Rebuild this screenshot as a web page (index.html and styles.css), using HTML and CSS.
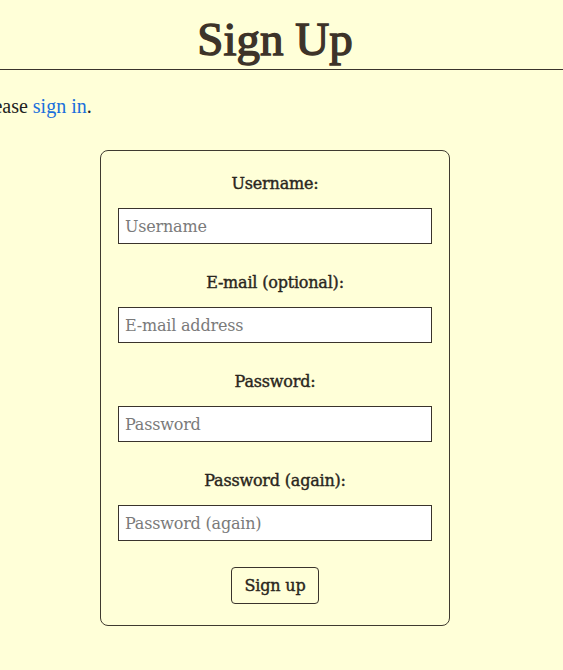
FILE: index.html
```html
<!DOCTYPE html>
<html lang="en">
<head>
<meta charset="utf-8">
<title>Sign Up</title>
<link rel="stylesheet" href="styles.css">
</head>
<body>
<header class="page-head">
  <h1 class="title">Sign Up</h1>
</header>
<main class="content">
  <p class="intro">Already have an account? Then please <a href="#" class="link">sign in</a>.</p>
  <form class="card">
    <div class="field">
      <label class="label" for="u">Username:</label>
      <input class="input" id="u" type="text" placeholder="Username">
    </div>
    <div class="field">
      <label class="label" for="e">E-mail (optional):</label>
      <input class="input" id="e" type="email" placeholder="E-mail address">
    </div>
    <div class="field">
      <label class="label" for="p1">Password:</label>
      <input class="input" id="p1" type="password" placeholder="Password">
    </div>
    <div class="field">
      <label class="label" for="p2">Password (again):</label>
      <input class="input" id="p2" type="password" placeholder="Password (again)">
    </div>
    <button class="btn" type="button">Sign up</button>
  </form>
</main>
</body>
</html>
```
FILE: styles.css
```css
html, body {
  margin: 0;
  padding: 0;
  background: #ffffd8;
  overflow: hidden;
}
body {
  width: 563px;
  height: 670px;
  font-family: "Liberation Serif", serif;
  color: #2a2620;
}
.page-head {
  border-bottom: 1px solid #3a342c;
  height: 69px;
  display: flex;
  justify-content: center;
  padding-right: 13px;
}
.title {
  margin: 0;
  padding-top: 12px;
  font-size: 47px;
  line-height: 54px;
  font-weight: 400;
  color: #3d3329;
  -webkit-text-stroke: 1.4px #3d3329;
}
.content {
  display: flex;
  flex-direction: column;
  align-items: center;
  padding-right: 13px;
}
.intro {
  align-self: flex-start;
  margin: 23px 0 0 0;
  font-size: 20px;
  line-height: 26px;
  white-space: nowrap;
  color: #222;
  transform: translateX(-280px);
}
.link {
  color: #1a6fdc;
  text-decoration: none;
}
.card {
  margin-top: 31px;
  box-sizing: border-box;
  width: 350px;
  border: 1px solid #3f3a30;
  border-radius: 8px;
  padding: 21px 17px 21px;
  display: flex;
  flex-direction: column;
  align-items: center;
}
.field {
  width: 100%;
  display: flex;
  flex-direction: column;
  align-items: center;
  margin-bottom: 27px;
}
.label {
  font-family: "DejaVu Serif", serif;
  font-size: 16px;
  font-weight: 400;
  line-height: 24px;
  color: #2a2620;
  margin-bottom: 12px;
  letter-spacing: -0.2px;
  -webkit-text-stroke: 0.4px #2a2620;
}
.input {
  width: 314px;
  height: 36px;
  box-sizing: border-box;
  border: 1px solid #3a342c;
  border-radius: 0;
  background: #fff;
  padding: 0 6px;
  font-family: "DejaVu Serif", serif;
  font-size: 16px;
  color: #222;
  letter-spacing: -0.2px;
}
.input::placeholder {
  color: #7a7a7a;
}
.btn {
  margin-top: -1px;
  width: 88px;
  height: 37px;
  border: 1px solid #3a342c;
  border-radius: 4px;
  background: #ffffd8;
  font-family: "DejaVu Serif", serif;
  font-weight: 400;
  font-size: 16px;
  color: #2a2620;
  letter-spacing: -0.2px;
  -webkit-text-stroke: 0.4px #2a2620;
}
```
